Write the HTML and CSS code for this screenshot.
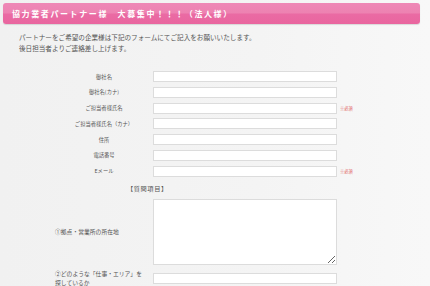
FILE: index.html
```html
<!DOCTYPE html>
<html lang="ja">
<head>
  <meta charset="UTF-8">
  <title>協力業者パートナー様 大募集中</title>
  <link rel="stylesheet" href="styles.css">
</head>
<body>
  <h1 class="title">協力業者パートナー様　大募集中！！！（法人様）</h1>

  <p class="intro">
    パートナーをご希望の企業様は下記のフォームにてご記入をお願いいたします。<br>
    後日担当者よりご連絡差し上げます。
  </p>

  <form class="entry">
    <label class="lbl">御社名</label>
    <input class="field" type="text">
    <span></span>

    <label class="lbl">御社名(カナ)</label>
    <input class="field" type="text">
    <span></span>

    <label class="lbl">ご担当者様氏名</label>
    <input class="field" type="text">
    <span class="req">※必須</span>

    <label class="lbl">ご担当者様氏名（カナ）</label>
    <input class="field" type="text">
    <span></span>

    <label class="lbl">住所</label>
    <input class="field" type="text">
    <span></span>

    <label class="lbl">電話番号</label>
    <input class="field" type="text">
    <span></span>

    <label class="lbl">Eメール</label>
    <input class="field" type="text">
    <span class="req">※必須</span>

    <div class="section">【質問項目】</div>

    <label class="lbl left">①拠点・営業所の所在地</label>
    <textarea class="area"></textarea>
    <span></span>

    <label class="lbl left">②どのような「仕事・エリア」を<br>探しているか</label>
    <input class="field" type="text">
    <span></span>
  </form>
</body>
</html>
```

FILE: styles.css
```css
body {
  margin: 0;
  background: linear-gradient(to right, #f1f1f1, #f4f4f4 60%, #f8f8f8);
  font-family: "Noto Sans CJK JP", "Noto Sans", sans-serif;
  color: #555;
  height: 286px;
  overflow: hidden;
}
.title {
  margin: 3px 10px 0 3px;
  height: 21px;
  line-height: 21px;
  padding-left: 9px;
  border-radius: 3px;
  background: linear-gradient(#ee88b6 0%, #ed82b1 48%, #ea6ba4 52%, #e9669f 100%);
  box-shadow: 0 1px 1px rgba(0,0,0,0.12);
  color: #fff;
  font-size: 8px;
  font-weight: bold;
  letter-spacing: 1.6px;
}
.intro {
  margin: 8px 0 0 19px;
  font-size: 6.6px;
  line-height: 11px;
  color: #555;
}
.entry {
  display: grid;
  grid-template-columns: 98px 184px auto;
  row-gap: 4.8px;
  align-items: center;
  margin: 17px 0 0 55px;
}
.lbl {
  font-size: 5.3px;
  text-align: center;
  color: #555;
}
.lbl.left {
  text-align: left;
  font-size: 5.8px;
  line-height: 8.4px;
  white-space: nowrap;
}
.field {
  box-sizing: border-box;
  width: 184px;
  height: 11px;
  margin: 0;
  padding: 0;
  border: 1px solid #dcdcdc;
  background: #fff;
}
.area {
  box-sizing: border-box;
  width: 184px;
  height: 66px;
  margin: 0;
  padding: 0;
  border: 1px solid #dcdcdc;
  background: #fff;
  resize: vertical;
  display: block;
}
.req {
  color: #e05a5a;
  font-size: 4.2px;
  padding-left: 3px;
}
.section {
  grid-column: 1 / 4;
  padding-left: 72px;
  font-size: 6.2px;
  letter-spacing: 0.6px;
  line-height: 13px;
  color: #555;
}
```
